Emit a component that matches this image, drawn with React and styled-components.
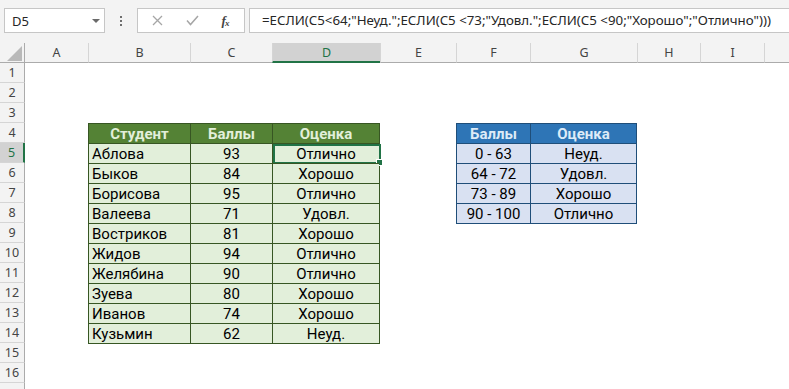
import styled, { createGlobalStyle, css } from "styled-components";

const GlobalStyle = createGlobalStyle`
  html, body {
    margin: 0;
    padding: 0;
    background: #ffffff;
    overflow: hidden;
  }
  * {
    box-sizing: border-box;
  }
`;

const UI_FONT = `"Noto Sans", "Open Sans", sans-serif`;
const CELL_FONT = `Roboto, "Liberation Sans", sans-serif`;
const EXCEL_GREEN = "#217346";

const columns = [
  { name: "A", width: 63 },
  { name: "B", width: 102 },
  { name: "C", width: 82 },
  { name: "D", width: 108 },
  { name: "E", width: 76 },
  { name: "F", width: 74 },
  { name: "G", width: 107 },
  { name: "H", width: 63 },
  { name: "I", width: 64 },
  { name: "J", width: null },
];

// the last row only peeks in under the bottom edge, its number is hidden
const ROW_COUNT = 17;
const LABELED_ROWS = 16;

const students = [
  ["Аблова", 93, "Отлично"],
  ["Быков", 84, "Хорошо"],
  ["Борисова", 95, "Отлично"],
  ["Валеева", 71, "Удовл."],
  ["Востриков", 81, "Хорошо"],
  ["Жидов", 94, "Отлично"],
  ["Желябина", 90, "Отлично"],
  ["Зуева", 80, "Хорошо"],
  ["Иванов", 74, "Хорошо"],
  ["Кузьмин", 62, "Неуд."],
];

const grades = [
  ["0 - 63", "Неуд."],
  ["64 - 72", "Удовл."],
  ["73 - 89", "Хорошо"],
  ["90 - 100", "Отлично"],
];

const formula = '=ЕСЛИ(C5<64;"Неуд.";ЕСЛИ(C5 <73;"Удовл.";ЕСЛИ(C5 <90;"Хорошо";"Отлично")))';

/* ---------- formula bar ---------- */

const Window = styled.div`
  width: 789px;
  height: 389px;
  overflow: hidden;
  background: #ffffff;
`;

const FormulaBar = styled.div`
  display: flex;
  align-items: flex-start;
  height: 43px;
  padding: 8px 0 0 4px;
  background: #f3f3f3;
  font-family: ${UI_FONT};
  color: #262626;
`;

const NameBox = styled.div`
  display: flex;
  align-items: center;
  justify-content: space-between;
  width: 101px;
  height: 25px;
  padding: 0 4px 0 7px;
  background: #ffffff;
  border: 1px solid #c6c6c6;
  font-size: 13px;
`;

const DropArrow = styled.span`
  width: 0;
  height: 0;
  border-left: 4px solid transparent;
  border-right: 4px solid transparent;
  border-top: 4px solid #6a6a6a;
`;

const Grip = styled.div`
  display: flex;
  flex-direction: column;
  gap: 2px;
  width: 32px;
  align-items: center;
  padding-top: 8px;

  span {
    width: 2px;
    height: 2px;
    background: #6d6d6d;
  }
`;

const ButtonsBox = styled.div`
  display: flex;
  align-items: center;
  justify-content: space-around;
  width: 108px;
  height: 25px;
  padding: 0 4px 0 2px;
  background: #ffffff;
  border: 1px solid #c6c6c6;
`;

const FxLabel = styled.span`
  font-family: "Liberation Serif", serif;
  font-style: italic;
  font-weight: bold;
  font-size: 13px;
  color: #444444;
  letter-spacing: -1px;

  sub {
    font-size: 9px;
    vertical-align: -1px;
  }
`;

const FormulaInput = styled.div`
  flex: 1;
  height: 25px;
  margin-left: 4px;
  margin-right: -4px;
  padding: 2px 0 0 12px;
  background: #ffffff;
  border: 1px solid #c6c6c6;
  font-size: 13.3px;
  white-space: nowrap;
  overflow: hidden;
`;

/* ---------- sheet grid ---------- */

const Sheet = styled.div`
  display: grid;
  grid-template-columns: 25px ${columns
      .map((c) => (c.width ? `${c.width}px` : "1fr"))
      .join(" ")};
  grid-template-rows: repeat(${ROW_COUNT + 1}, 20px);
`;

const placed = css`
  grid-column: ${({ $col, $colEnd }) => ($colEnd ? `${$col} / ${$colEnd}` : $col)};
  grid-row: ${({ $row, $rowEnd }) => ($rowEnd ? `${$row} / ${$rowEnd}` : $row)};
`;

const Corner = styled.div`
  ${placed};
  position: relative;
  background: #f3f3f3;
  border-right: 1px solid #ababab;
  border-bottom: 1px solid #ababab;
  padding: 2px 2px 1px 6px;

  svg {
    display: block;
  }
`;

const ColHeader = styled.div`
  ${placed};
  display: flex;
  align-items: center;
  justify-content: center;
  background: ${({ $active }) => ($active ? "#d2d2d2" : "#f3f3f3")};
  border-left: ${({ $first }) => ($first ? "none" : "1px solid #d5d5d5")};
  border-bottom: ${({ $active }) => ($active ? `2px solid ${EXCEL_GREEN}` : "1px solid #ababab")};
  padding-top: ${({ $active }) => ($active ? "1px" : "0")};
  font-family: ${UI_FONT};
  font-size: 12.5px;
  color: ${({ $active }) => ($active ? EXCEL_GREEN : "#444444")};
`;

const RowHeader = styled.div`
  ${placed};
  display: flex;
  align-items: center;
  justify-content: center;
  background: ${({ $active }) => ($active ? "#d2d2d2" : "#f3f3f3")};
  border-right: ${({ $active }) => ($active ? `2px solid ${EXCEL_GREEN}` : "1px solid #ababab")};
  border-bottom: 1px solid #d5d5d5;
  font-family: ${UI_FONT};
  font-size: 12.5px;
  color: ${({ $active }) => ($active ? EXCEL_GREEN : "#444444")};
`;

/* ---------- tables on the sheet ---------- */

const palettes = {
  green: { head: "#548235", headText: "#e2efda", body: "#e2efda", line: "#375623" },
  blue: { head: "#2e75b6", headText: "#ddebf7", body: "#d9e1f2", line: "#1f4e79" },
};

const DataTable = styled.div`
  ${placed};
  display: grid;
  grid-template-columns: ${({ $widths }) => $widths.map((w) => `${w}px`).join(" ")};
  grid-auto-rows: 20px;
  align-self: start;
  justify-self: start;
  border-right: 1px solid ${({ $tone }) => palettes[$tone].line};
  border-bottom: 1px solid ${({ $tone }) => palettes[$tone].line};
  font-family: ${CELL_FONT};
  font-size: 15px;
  color: #000000;
`;

const Cell = styled.div`
  position: relative;
  display: flex;
  align-items: flex-end;
  justify-content: ${({ $align }) => ($align === "left" ? "flex-start" : "center")};
  padding: 0 3px;
  line-height: 17px;
  white-space: nowrap;
  border-left: 1px solid ${({ $tone }) => palettes[$tone].line};
  border-top: 1px solid ${({ $tone }) => palettes[$tone].line};
  background: ${({ $tone }) => palettes[$tone].body};
`;

const HeadCell = styled(Cell)`
  justify-content: center;
  background: ${({ $tone }) => palettes[$tone].head};
  color: ${({ $tone }) => palettes[$tone].headText};
  font-weight: bold;
`;

const Selection = styled.div`
  position: absolute;
  left: 0;
  top: 0;
  right: -2px;
  bottom: -1px;
  border: 2px solid ${EXCEL_GREEN};
  pointer-events: none;
`;

const FillHandle = styled.div`
  position: absolute;
  right: -4px;
  bottom: -4px;
  width: 7px;
  height: 7px;
  background: ${EXCEL_GREEN};
  border: 1px solid #ffffff;
`;

const CloseIcon = () => (
  <svg width="11" height="11" viewBox="0 0 11 11">
    <path d="M1 1 L10 10 M10 1 L1 10" stroke="#a6a6a6" strokeWidth="1.3" fill="none" />
  </svg>
);

const CheckIcon = () => (
  <svg width="13" height="11" viewBox="0 0 13 11">
    <path d="M1 5.5 L4.5 9.5 L12 1" stroke="#a6a6a6" strokeWidth="1.5" fill="none" />
  </svg>
);

export default function App() {
  const activeCol = "D";
  const activeRow = 5;

  return (
    <Window>
      <GlobalStyle />
      <FormulaBar>
        <NameBox>
          <span>D5</span>
          <DropArrow />
        </NameBox>
        <Grip>
          <span />
          <span />
          <span />
        </Grip>
        <ButtonsBox>
          <CloseIcon />
          <CheckIcon />
          <FxLabel>
            f<sub>x</sub>
          </FxLabel>
        </ButtonsBox>
        <FormulaInput>{formula}</FormulaInput>
      </FormulaBar>

      <Sheet>
        <Corner $col={1} $row={1}>
          <svg width="16" height="16" viewBox="0 0 16 16">
            <path d="M16 1 L16 16 L1 16 Z" fill="#b9b9b9" />
          </svg>
        </Corner>

        {columns.map((c, i) => (
          <ColHeader
            key={c.name}
            $col={i + 2}
            $row={1}
            $first={i === 0}
            $active={c.name === activeCol}
          >
            {c.width ? c.name : ""}
          </ColHeader>
        ))}

        {Array.from({ length: ROW_COUNT }, (_, i) => (
          <RowHeader key={i} $col={1} $row={i + 2} $active={i + 1 === activeRow}>
            {i < LABELED_ROWS ? i + 1 : ""}
          </RowHeader>
        ))}

        <DataTable $col={3} $colEnd={6} $row={5} $rowEnd={16} $tone="green" $widths={[102, 82, 107]}>
          <HeadCell $tone="green">Студент</HeadCell>
          <HeadCell $tone="green">Баллы</HeadCell>
          <HeadCell $tone="green">Оценка</HeadCell>
          {students.map(([name, score, grade], i) => [
            <Cell key={`n${i}`} $tone="green" $align="left">
              {name}
            </Cell>,
            <Cell key={`s${i}`} $tone="green">
              {score}
            </Cell>,
            <Cell key={`g${i}`} $tone="green">
              {grade}
              {i === 0 && (
                <Selection>
                  <FillHandle />
                </Selection>
              )}
            </Cell>,
          ])}
        </DataTable>

        <DataTable $col={7} $colEnd={9} $row={5} $rowEnd={10} $tone="blue" $widths={[74, 106]}>
          <HeadCell $tone="blue">Баллы</HeadCell>
          <HeadCell $tone="blue">Оценка</HeadCell>
          {grades.map(([range, grade], i) => [
            <Cell key={`r${i}`} $tone="blue">
              {range}
            </Cell>,
            <Cell key={`q${i}`} $tone="blue">
              {grade}
            </Cell>,
          ])}
        </DataTable>
      </Sheet>
    </Window>
  );
}
